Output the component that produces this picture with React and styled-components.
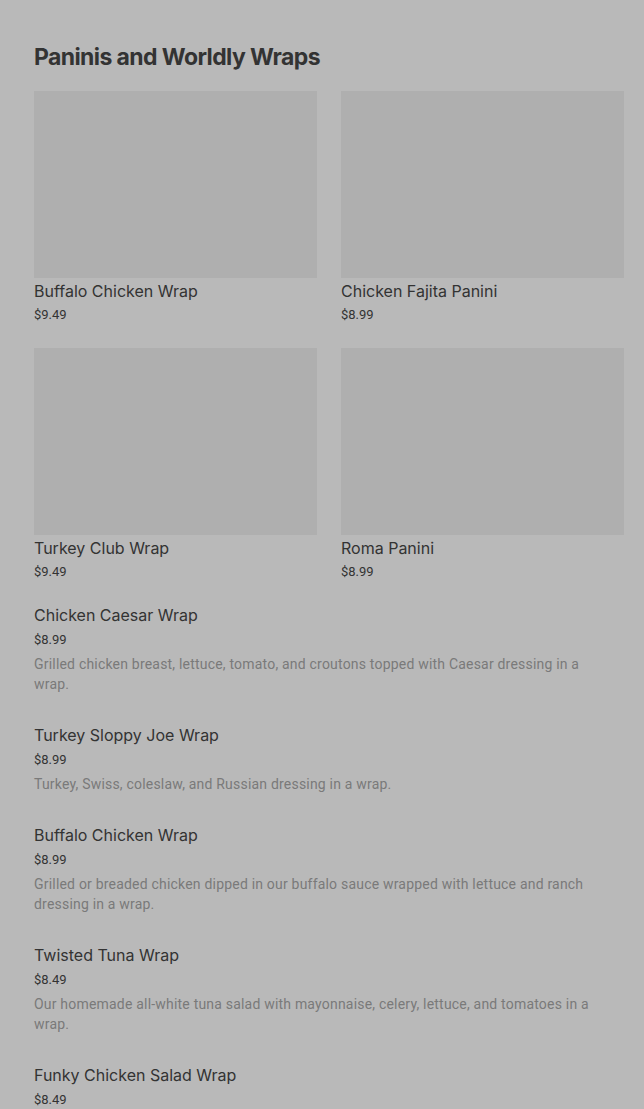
import styled, { createGlobalStyle } from "styled-components";

const Global = createGlobalStyle`
  html, body {
    margin: 0;
    background: #b9b9b9;
  }
  body {
    font-family: Roboto, "Liberation Sans", sans-serif;
    color: #333;
  }
`;

const Page = styled.main`
  padding: 40px 20px 0 34px;
`;

const Heading = styled.h2`
  margin: 0 0 17px;
  font-family: Inter, "Liberation Sans", sans-serif;
  font-weight: 700;
  font-size: 23px;
  line-height: 34px;
  letter-spacing: -0.6px;
  color: #333;
`;

const Grid = styled.div`
  display: grid;
  grid-template-columns: 1fr 1fr;
  column-gap: 24px;
  row-gap: 22px;
`;

const Card = styled.div`
  display: flex;
  flex-direction: column;
`;

const Thumb = styled.div`
  height: 187px;
  background: #afafaf;
`;

const Name = styled.div`
  font-family: Inter, Roboto, sans-serif;
  font-size: 16px;
  line-height: 24px;
  font-weight: 400;
  color: #333;
  margin-top: ${(p) => p.$top || 0}px;
`;

const Price = styled.div`
  font-size: 13px;
  line-height: 22px;
  color: #333;
  margin-top: ${(p) => p.$top || 0}px;
`;

const List = styled.div`
  margin-top: 20px;
  padding-right: 20px;
  display: flex;
  flex-direction: column;
  gap: 29px;
`;

const Item = styled.div`
  display: flex;
  flex-direction: column;
`;

const Desc = styled.p`
  margin: 3px 0 0;
  font-size: 14px;
  line-height: 20px;
  letter-spacing: 0.2px;
  color: #7a7a7a;
`;

const cards = [
  { name: "Buffalo Chicken Wrap", price: "$9.49" },
  { name: "Chicken Fajita Panini", price: "$8.99" },
  { name: "Turkey Club Wrap", price: "$9.49" },
  { name: "Roma Panini", price: "$8.99" },
];

const items = [
  {
    name: "Chicken Caesar Wrap",
    price: "$8.99",
    desc: "Grilled chicken breast, lettuce, tomato, and croutons topped with Caesar dressing in a wrap.",
  },
  {
    name: "Turkey Sloppy Joe Wrap",
    price: "$8.99",
    desc: "Turkey, Swiss, coleslaw, and Russian dressing in a wrap.",
  },
  {
    name: "Buffalo Chicken Wrap",
    price: "$8.99",
    desc: "Grilled or breaded chicken dipped in our buffalo sauce wrapped with lettuce and ranch dressing in a wrap.",
  },
  {
    name: "Twisted Tuna Wrap",
    price: "$8.49",
    desc: "Our homemade all-white tuna salad with mayonnaise, celery, lettuce, and tomatoes in a wrap.",
  },
  {
    name: "Funky Chicken Salad Wrap",
    price: "$8.49",
    desc: "",
  },
];

export default function App() {
  return (
    <>
      <Global />
      <Page>
        <Heading>Paninis and Worldly Wraps</Heading>
        <Grid>
          {cards.map((c) => (
            <Card key={c.name}>
              <Thumb />
              <Name $top={1}>{c.name}</Name>
              <Price $top={1}>{c.price}</Price>
            </Card>
          ))}
        </Grid>
        <List>
          {items.map((it) => (
            <Item key={it.name}>
              <Name>{it.name}</Name>
              <Price $top={2}>{it.price}</Price>
              {it.desc && <Desc>{it.desc}</Desc>}
            </Item>
          ))}
        </List>
      </Page>
    </>
  );
}
